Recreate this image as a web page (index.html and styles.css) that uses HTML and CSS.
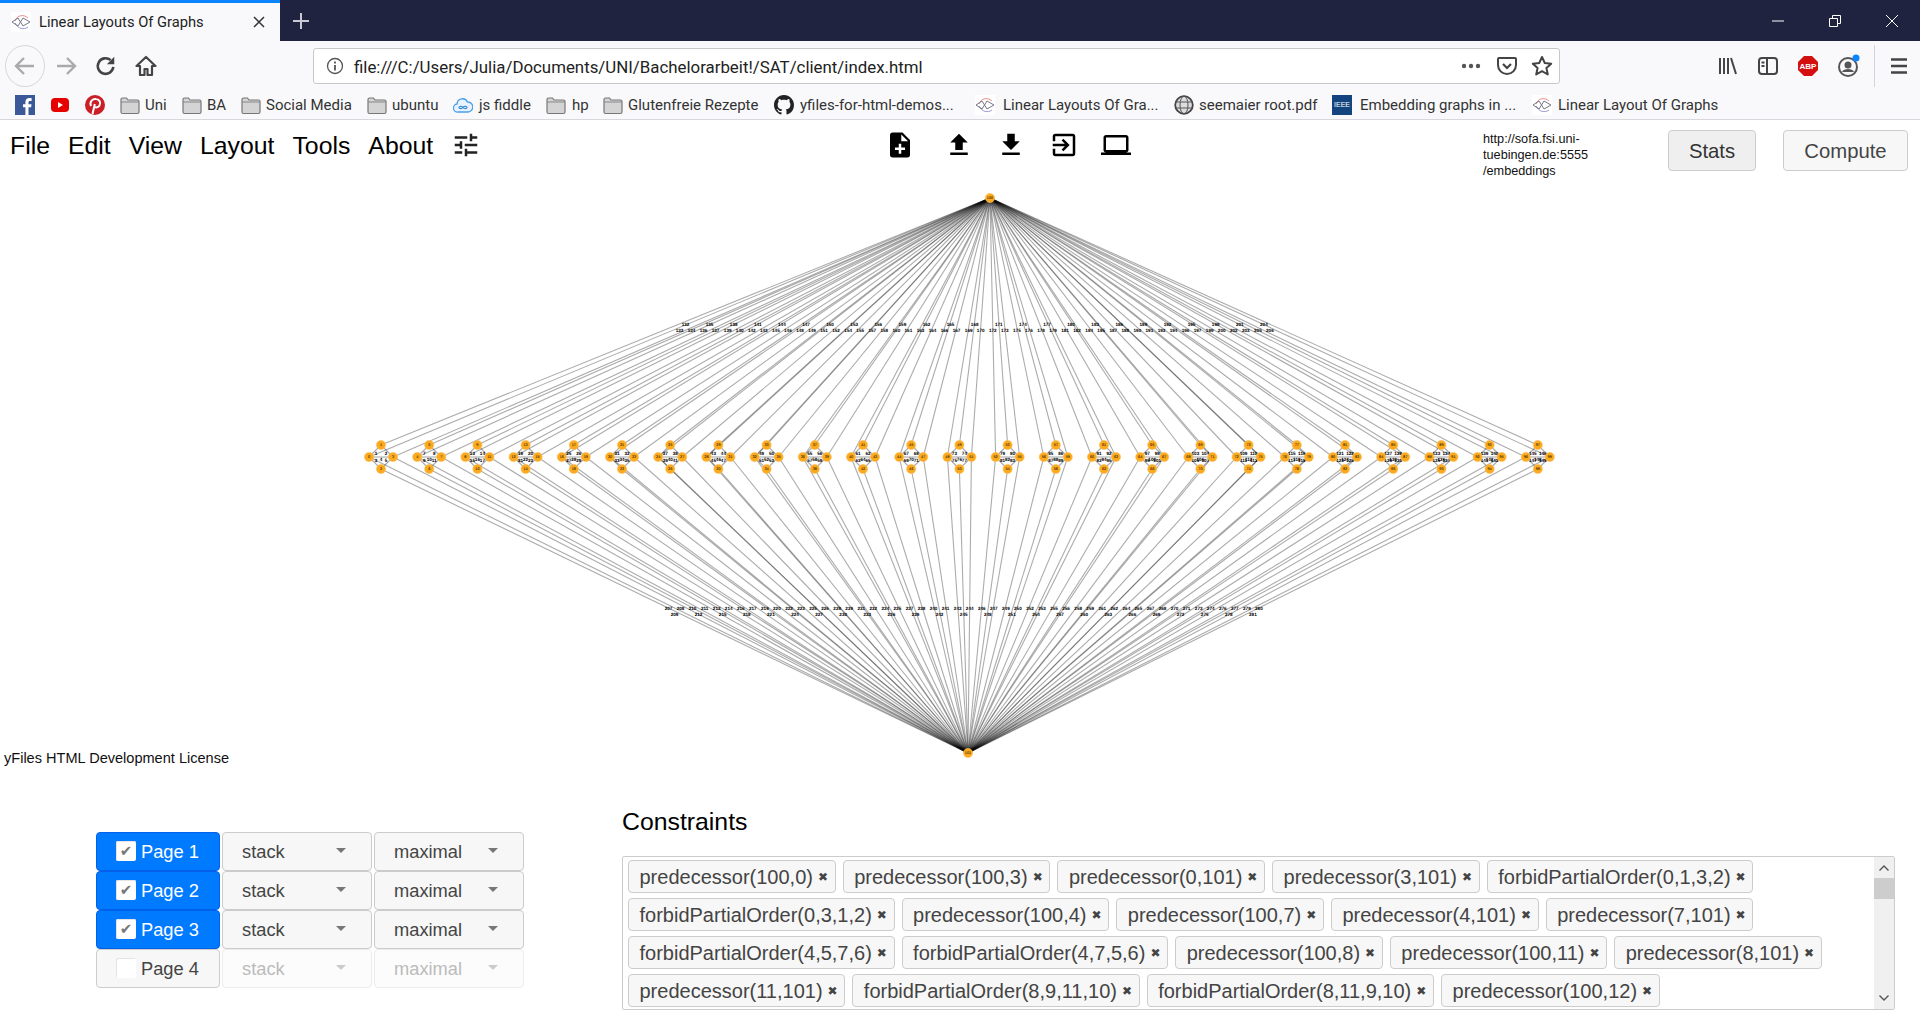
FILE: index.html
```html
<!DOCTYPE html>
<html lang="en">
<head>
<meta charset="UTF-8">
<title>Linear Layouts Of Graphs</title>
<link rel="stylesheet" href="styles.css">
</head>
<body>
    <svg class="defs" width="0" height="0">
        <symbol id="favicon" viewBox="0 0 20 20">
            <rect width="20" height="20" fill="#fff"/>
            <path d="M4 9C6 3 13 2 17 6" fill="none" stroke="#e88" stroke-width="1"/>
            <path d="M4 11c3 6 9 7 13 4" fill="none" stroke="#99c" stroke-width="1"/>
            <path d="M1 10l6-4 5 8 7-4M1 10l6 4 5-8 7 4" fill="none" stroke="#778" stroke-width="1"/>
        </symbol>
        <symbol id="folder" viewBox="0 0 20 20">
            <path d="M1 4.500C1 3.500 1.500 3 2.500 3h4L8 5h9.500c1 0 1.500.5 1.500 1.500V17c0 1-.5 1.500-1.500 1.500h-15C1.500 18.500 1 18 1 17z" fill="#d4d4d4" stroke="#777" stroke-width="1.200"/>
            <path d="M1 7h18" stroke="#888" stroke-width="1"/>
        </symbol>
    </svg>

    <div class="tabbar">
        <div class="tab">
            <svg class="favicon" width="20" height="20"><use href="#favicon"/></svg>
            <span class="tab-title">Linear Layouts Of Graphs</span>
            <svg class="tab-close" width="14" height="14" viewBox="0 0 14 14"><path d="M2 2l10 10M12 2L2 12" stroke="#333" stroke-width="1.500"/></svg>
        </div>
        <svg class="new-tab" width="18" height="18" viewBox="0 0 18 18"><path d="M9 1v16M1 9h16" stroke="#c8c9d4" stroke-width="2"/></svg>
        <div class="window-btns">
            <svg width="14" height="14" viewBox="0 0 14 14"><path d="M1 7h12" stroke="#fff"/></svg>
            <svg width="14" height="14" viewBox="0 0 14 14"><path d="M1.500 4.500h8v8h-8zM4.500 4.500v-3h8v8h-3" fill="none" stroke="#fff"/></svg>
            <svg width="14" height="14" viewBox="0 0 14 14"><path d="M1 1l12 12M13 1L1 13" stroke="#fff"/></svg>
        </div>
    </div>

    <div class="navbar">
        <div class="back-btn">
            <svg width="24" height="24" viewBox="0 0 24 24"><path d="M21 12H4M11 4l-8 8 8 8" fill="none" stroke="#aaa" stroke-width="2.400"/></svg>
        </div>
        <div class="nav-btn nav-forward">
            <svg width="24" height="24" viewBox="0 0 24 24"><path d="M3 12h17M13 4l8 8-8 8" fill="none" stroke="#aaa" stroke-width="2.400"/></svg>
        </div>
        <div class="nav-btn">
            <svg width="22" height="22" viewBox="0 0 24 24"><path d="M20 13a8.500 8.500 0 1 1-3-7.500" fill="none" stroke="#444" stroke-width="2.800"/><path d="M21 2v8h-8z" fill="#444"/></svg>
        </div>
        <div class="nav-btn">
            <svg width="24" height="24" viewBox="0 0 24 24"><path d="M12 3L2.500 12H6v9h4.500v-6h3v6H18v-9h3.500z" fill="none" stroke="#444" stroke-width="2.200" stroke-linejoin="round"/></svg>
        </div>
        <div class="urlbar">
            <svg class="url-info" width="18" height="18" viewBox="0 0 18 18"><circle cx="9" cy="9" r="7.500" fill="none" stroke="#555" stroke-width="1.300"/><path d="M9 8v5.500M9 4.500v2" stroke="#555" stroke-width="1.800"/></svg>
            <span class="url-text">file:///C:/Users/Julia/Documents/UNI/Bachelorarbeit!/SAT/client/index.html</span>
            <svg class="url-dots" width="20" height="6" viewBox="0 0 20 6"><circle cx="3" cy="3" r="2.200" fill="#555"/><circle cx="10" cy="3" r="2.200" fill="#555"/><circle cx="17" cy="3" r="2.200" fill="#555"/></svg>
            <svg class="url-pocket" width="22" height="22" viewBox="0 0 22 22"><path d="M3 3h16c.6 0 1 .4 1 1v6c0 5-4 9-9 9s-9-4-9-9V4c0-.6.4-1 1-1z" fill="none" stroke="#444" stroke-width="2"/><path d="M7 9l4 4 4-4" fill="none" stroke="#444" stroke-width="2.200"/></svg>
            <svg class="url-star" width="22" height="22" viewBox="0 0 22 22"><path d="M11 2l2.800 6 6.400.7-4.800 4.300 1.400 6.500L11 16.200 5.200 19.500 6.600 13 1.800 8.700 8.200 8z" fill="none" stroke="#444" stroke-width="2" stroke-linejoin="round"/></svg>
        </div>
        <div class="nav-right">
            <svg width="22" height="22" viewBox="0 0 22 22"><path d="M3 3v16M7 3v16M11 3v16M14 3l5 16" stroke="#444" stroke-width="2" fill="none"/></svg>
            <svg width="22" height="22" viewBox="0 0 22 22"><rect x="2" y="3" width="18" height="16" rx="3" fill="none" stroke="#444" stroke-width="2"/><path d="M10 3v16M4.500 7.500h3M4.500 11h3" stroke="#444" stroke-width="2"/></svg>
            <svg width="22" height="22" viewBox="0 0 22 22"><path d="M7 1h8l6 6v8l-6 6H7l-6-6V7z" fill="#d40f0f"/><text class="abp" x="11" y="14" text-anchor="middle">ABP</text></svg>
            <svg width="24" height="24" viewBox="0 0 24 24"><circle cx="11" cy="13" r="9" fill="none" stroke="#555" stroke-width="2"/><circle cx="11" cy="11" r="3.500" fill="#555"/><path d="M5 18c1-4 11-4 12 0z" fill="#555"/><circle cx="19" cy="4" r="3.500" fill="#0a84ff"/></svg>
            <div class="nav-divider"></div>
            <svg width="22" height="22" viewBox="0 0 22 22"><path d="M3 4.500h16M3 11h16M3 17.500h16" stroke="#444" stroke-width="2.400"/></svg>
        </div>
    </div>

    <div class="bookmarks">
        <div class="bm"><svg width="20" height="20" viewBox="0 0 20 20"><rect width="20" height="20" fill="#3b5998"/><path fill="#fff" d="M13.500 20v-7.700h2.600l.4-3h-3V7.400c0-.9.2-1.500 1.500-1.500h1.600V3.200c-.3 0-1.200-.1-2.300-.1-2.300 0-3.900 1.400-3.900 4v2.200H8v3h2.400V20z"/></svg></div>
        <div class="bm"><svg width="18" height="20" viewBox="0 0 18 20"><rect y="3" width="18" height="14" rx="4" fill="#e60000"/><path d="M7 7l5 3-5 3z" fill="#fff"/></svg></div>
        <div class="bm"><svg width="20" height="20" viewBox="0 0 20 20"><circle cx="10" cy="10" r="10" fill="#cb1f27"/><path d="M7.500 19l2.300-10M6 11C4 6.500 8 3.500 11 4c4 .5 5 4 3.500 6.500-1.300 2.200-4 2.400-5 1" fill="none" stroke="#fff" stroke-width="2"/></svg></div>
        <div class="bm bm-folder"><svg width="20" height="20"><use href="#folder"/></svg>Uni</div>
        <div class="bm bm-folder"><svg width="20" height="20"><use href="#folder"/></svg>BA</div>
        <div class="bm bm-folder"><svg width="20" height="20"><use href="#folder"/></svg>Social Media</div>
        <div class="bm bm-folder"><svg width="20" height="20"><use href="#folder"/></svg>ubuntu</div>
        <div class="bm"><svg width="20" height="20" viewBox="0 0 20 20"><path d="M5 17a4 4 0 0 1-1-8 5.500 5.500 0 0 1 10.500-2A5 5 0 0 1 15 17z" fill="#e8f3ff" stroke="#4a9fe8" stroke-width="1.300"/><path d="M10 12.500c-1-1.500-4-1.500-4 0s3 1.500 4 0 4-1.500 4 0-3 1.500-4 0z" fill="none" stroke="#3a8fd8" stroke-width="1.200"/></svg>js fiddle</div>
        <div class="bm"><svg width="20" height="20"><use href="#folder"/></svg>hp</div>
        <div class="bm bm-folder"><svg width="20" height="20"><use href="#folder"/></svg>Glutenfreie Rezepte</div>
        <div class="bm"><svg width="20" height="20" viewBox="0 0 16 16"><path fill="#222" d="M8 0C3.580 0 0 3.580 0 8c0 3.540 2.290 6.530 5.470 7.590.4.070.55-.17.55-.38 0-.19-.01-.82-.01-1.490-2.010.37-2.530-.49-2.690-.94-.09-.23-.48-.94-.82-1.130-.28-.15-.68-.52-.01-.53.63-.01 1.080.58 1.230.82.72 1.210 1.870.87 2.330.66.07-.52.28-.87.51-1.070-1.780-.2-3.640-.89-3.640-3.950 0-.87.31-1.590.82-2.150-.08-.2-.36-1.020.08-2.120 0 0 .67-.21 2.200.82.64-.18 1.320-.27 2-.27.68 0 1.360.09 2 .27 1.530-1.040 2.200-.82 2.200-.82.44 1.100.16 1.920.08 2.120.51.56.82 1.270.82 2.150 0 3.070-1.870 3.750-3.650 3.950.29.25.54.73.54 1.480 0 1.070-.01 1.930-.01 2.200 0 .21.15.46.55.38A8.013 8.013 0 0 0 16 8c0-4.420-3.580-8-8-8z"/></svg>yfiles-for-html-demos...</div>
        <div class="bm bm-wide"><svg width="20" height="20"><use href="#favicon"/></svg>Linear Layouts Of Gra...</div>
        <div class="bm bm-folder"><svg width="20" height="20" viewBox="0 0 20 20"><circle cx="10" cy="10" r="8.800" fill="#ddd" stroke="#444" stroke-width="1.800"/><ellipse cx="10" cy="10" rx="4" ry="8.800" fill="none" stroke="#555"/><path d="M1.500 7h17M1.500 13h17" stroke="#555"/></svg>seemaier root.pdf</div>
        <div class="bm bm-wide"><svg width="20" height="20" viewBox="0 0 20 20"><rect width="20" height="20" fill="#14447e"/><text class="bm-ieee" x="10" y="12" text-anchor="middle">IEEE</text></svg>Embedding graphs in ...</div>
        <div class="bm"><svg width="20" height="20"><use href="#favicon"/></svg>Linear Layout Of Graphs</div>
    </div>

    <div class="menubar">
        <div class="menu">
            <span>File</span>
            <span>Edit</span>
            <span>View</span>
            <span>Layout</span>
            <span>Tools</span>
            <span>About</span>
            <svg width="30" height="30" viewBox="0 0 24 24"><path d="M3 17v2h6v-2H3zM3 5v2h10V5H3zm10 16v-2h8v-2h-8v-2h-2v6h2zM7 9v2H3v2h4v2h2V9H7zm14 4v-2H11v2h10zm-6-4h2V7h4V5h-4V3h-2v6z"/></svg>
        </div>
        <div class="tools">
            <svg class="tool-first" width="30" height="30" viewBox="0 0 24 24"><path d="M14 2H6c-1.100 0-1.990.9-1.990 2L4 20c0 1.100.89 2 1.990 2H18c1.100 0 2-.9 2-2V8l-6-6zm2 14h-3v3h-2v-3H8v-2h3v-3h2v3h3v2zm-3-7V3.500L18.500 9H13z"/></svg>
            <svg width="30" height="30" viewBox="0 0 24 24"><path d="M9 16h6v-6h4l-7-7-7 7h4zm-4 2h14v2H5z"/></svg>
            <svg width="30" height="30" viewBox="0 0 24 24"><path d="M19 9h-4V3H9v6H5l7 7 7-7zM5 18v2h14v-2H5z"/></svg>
            <svg width="30" height="30" viewBox="0 0 24 24"><path d="M10.090 15.590L11.500 17l5-5-5-5-1.410 1.410L12.670 11H3v2h9.670l-2.580 2.590zM19 3H5c-1.110 0-2 .9-2 2v4h2V5h14v14H5v-4H3v4c0 1.100.89 2 2 2h14c1.100 0 2-.9 2-2V5c0-1.100-.9-2-2-2z"/></svg>
            <svg width="30" height="30" viewBox="0 0 24 24"><path d="M20 18c1.100 0 1.990-.9 1.990-2L22 6c0-1.100-.9-2-2-2H4c-1.100 0-2 .9-2 2v10c0 1.100.9 2 2 2H0v2h24v-2h-4zM4 6h16v10H4V6z"/></svg>
        </div>
        <div class="server-url">http://sofa.fsi.uni-<br>tuebingen.de:5555<br>/embeddings</div>
        <button class="btn btn-stats">Stats</button>
        <button class="btn btn-compute">Compute</button>
    </div>

    <div class="graph" id="graph">
        <div class="license">yFiles HTML Development License</div>
    </div>

    <div class="panel">
        <div class="pages">
            <div class="page-btn active"><span class="check">&#10004;</span>Page 1</div>
            <div class="select"><span>stack</span><i class="caret"></i></div>
            <div class="select"><span>maximal</span><i class="caret"></i></div>

            <div class="page-btn active"><span class="check">&#10004;</span>Page 2</div>
            <div class="select"><span>stack</span><i class="caret"></i></div>
            <div class="select"><span>maximal</span><i class="caret"></i></div>

            <div class="page-btn active"><span class="check">&#10004;</span>Page 3</div>
            <div class="select"><span>stack</span><i class="caret"></i></div>
            <div class="select"><span>maximal</span><i class="caret"></i></div>

            <div class="page-btn"><span class="check"></span>Page 4</div>
            <div class="select disabled"><span>stack</span><i class="caret"></i></div>
            <div class="select disabled"><span>maximal</span><i class="caret"></i></div>
        </div>

        <div class="constraints">
            <h2>Constraints</h2>
            <div class="constraint-box">
                <div class="chips">
                    <span class="chip">predecessor(100,0)<b>&#10006;</b></span>
                    <span class="chip">predecessor(100,3)<b>&#10006;</b></span>
                    <span class="chip">predecessor(0,101)<b>&#10006;</b></span>
                    <span class="chip">predecessor(3,101)<b>&#10006;</b></span>
                    <span class="chip">forbidPartialOrder(0,1,3,2)<b>&#10006;</b></span>
                    <span class="chip">forbidPartialOrder(0,3,1,2)<b>&#10006;</b></span>
                    <span class="chip">predecessor(100,4)<b>&#10006;</b></span>
                    <span class="chip">predecessor(100,7)<b>&#10006;</b></span>
                    <span class="chip">predecessor(4,101)<b>&#10006;</b></span>
                    <span class="chip">predecessor(7,101)<b>&#10006;</b></span>
                    <span class="chip">forbidPartialOrder(4,5,7,6)<b>&#10006;</b></span>
                    <span class="chip">forbidPartialOrder(4,7,5,6)<b>&#10006;</b></span>
                    <span class="chip">predecessor(100,8)<b>&#10006;</b></span>
                    <span class="chip">predecessor(100,11)<b>&#10006;</b></span>
                    <span class="chip">predecessor(8,101)<b>&#10006;</b></span>
                    <span class="chip">predecessor(11,101)<b>&#10006;</b></span>
                    <span class="chip">forbidPartialOrder(8,9,11,10)<b>&#10006;</b></span>
                    <span class="chip">forbidPartialOrder(8,11,9,10)<b>&#10006;</b></span>
                    <span class="chip">predecessor(100,12)<b>&#10006;</b></span>
                </div>
                <div class="scrollbar">
                    <svg width="12" height="8" viewBox="0 0 12 8"><path d="M1.500 6.500L6 2l4.500 4.500" fill="none" stroke="#555" stroke-width="1.400"/></svg>
                    <div class="scroll-track"><div class="scroll-thumb"></div></div>
                    <svg width="12" height="8" viewBox="0 0 12 8"><path d="M1.500 1.500L6 6l4.500-4.500" fill="none" stroke="#555" stroke-width="1.400"/></svg>
                </div>
            </div>
        </div>
    </div>

    <script src="graph.js"></script>
</body>
</html>
```

FILE: styles.css
```css
* {
    box-sizing: border-box;
}

body {
    margin: 0;
    width: 1920px;
    height: 1030px;
    overflow: hidden;
    background-color: #fff;
    font-family: "Liberation Sans", Arial, sans-serif;
    color: #000;
}

.defs {
    display: block;
    height: 0;
}

/* browser window */

.tabbar {
    display: flex;
    align-items: center;
    height: 41px;
    background-color: #20233f;
}

.tab {
    display: flex;
    align-items: center;
    width: 280px;
    height: 41px;
    padding: 0 14px 0 11px;
    background-color: #f9f9fb;
    border-top: 3px solid #0a84ff;
    font-family: Roboto, sans-serif;
    font-size: 14.700px;
    color: #222;
}

.tab-title {
    margin-left: 8px;
    flex: 1;
}

.new-tab {
    margin-left: 12px;
}

.window-btns {
    display: flex;
    gap: 43px;
    margin-left: auto;
    margin-right: 21px;
}

.navbar {
    display: flex;
    align-items: center;
    height: 49px;
    background-color: #f9f9fb;
}

.back-btn {
    display: flex;
    align-items: center;
    justify-content: center;
    width: 40px;
    height: 42px;
    margin-left: 5px;
    border: 1px solid #d8d8dc;
    border-radius: 50%;
}

.nav-btn {
    display: flex;
    justify-content: center;
    width: 40px;
}

.nav-forward {
    margin-left: 1px;
}

.urlbar {
    display: flex;
    align-items: center;
    width: 1247px;
    height: 36px;
    margin: 1px 0 0 147px;
    padding-left: 12px;
    background-color: #fff;
    border: 1px solid #c8c8c8;
    border-radius: 3px;
}

.url-text {
    margin-left: 10px;
    padding-top: 2px;
    font-family: Roboto, sans-serif;
    font-size: 16.850px;
    color: #222;
}

.url-dots {
    margin-left: auto;
}

.url-pocket {
    margin-left: 15px;
}

.url-star {
    margin: 0 6px 0 13px;
}

.nav-right {
    display: flex;
    align-items: center;
    gap: 18px;
    margin-left: 157px;
}

.nav-divider {
    width: 1px;
    height: 42px;
    margin-left: -5px;
    margin-right: -5px;
    background-color: #d4d4d8;
}

.abp {
    font-family: "Liberation Sans", sans-serif;
    font-size: 8px;
    font-weight: bold;
    fill: #fff;
}

.bookmarks {
    display: grid;
    grid-template-columns: 36px 34px 35px 62px 59px 126px 86px 93px 57px 171px 201px 199px 158px 200px auto;
    align-items: center;
    height: 30px;
    padding-left: 15px;
    background-color: #f9f9fb;
    border-bottom: 1px solid #d8d8dc;
    font-family: Roboto, sans-serif;
    font-size: 15px;
    color: #333;
}

.bm {
    display: flex;
    align-items: center;
    gap: 6px;
    white-space: nowrap;
}

.bm-folder {
    gap: 5px;
}

.bm-wide {
    gap: 8px;
}

.bm-ieee {
    font-family: "Liberation Sans", sans-serif;
    font-size: 7px;
    fill: #fff;
}

/* app toolbar */

.menubar {
    display: flex;
    align-items: flex-start;
    height: 60px;
    padding-top: 10px;
}

.menu {
    display: flex;
    align-items: center;
    gap: 18px;
    width: 885px;
    padding-left: 10px;
    font-size: 24.800px;
    line-height: 32px;
}

.menu svg {
    fill: #222;
    margin-top: -2px;
}

.tools {
    display: flex;
    gap: 22.500px;
}

.tool-first {
    margin-right: 6px;
}

.server-url {
    width: 185px;
    margin-left: 352px;
    margin-top: 2px;
    font-size: 12.700px;
    line-height: 15.800px;
    color: #111;
}

.btn {
    height: 41px;
    padding: 2px 0 0;
    background-color: #f7f7f7;
    border: 1px solid #ccc;
    border-radius: 4px;
    font-family: "Liberation Sans", Arial, sans-serif;
    font-size: 20.300px;
    color: #444;
}

.btn-stats {
    width: 88px;
    background-color: #efefef;
    color: #333;
}

.btn-compute {
    width: 125px;
    margin-left: 27px;
}

/* graph canvas */

.graph {
    position: relative;
    height: 592px;
}

.graph svg {
    display: block;
    text-rendering: geometricPrecision;
}

.graph text {
    font-family: "Liberation Sans", sans-serif;
    fill: #000;
    text-anchor: middle;
}

.edge-label {
    font-size: 4.600px;
    font-weight: bold;
}

.node-label {
    font-size: 3.800px;
}

.license {
    position: absolute;
    left: 4px;
    top: 570px;
    font-size: 14.550px;
    line-height: 17px;
    color: #111;
}

/* bottom panel */

.panel {
    display: flex;
    align-items: flex-start;
}

.pages {
    display: grid;
    grid-template-columns: 124px 150px 150px;
    grid-auto-rows: 39px;
    column-gap: 2px;
    margin: 60px 0 0 96px;
    font-size: 18.300px;
}

.page-btn {
    display: flex;
    align-items: center;
    padding-left: 19px;
    background-color: #f7f7f7;
    border: 1px solid #ccc;
    border-radius: 4px;
    color: #444;
}

.page-btn.active {
    background-color: #007bff;
    border-color: #0460e8;
    color: #fff;
}

.check {
    display: flex;
    align-items: center;
    justify-content: center;
    width: 20px;
    height: 20px;
    margin-right: 5px;
    margin-top: -2px;
    background-color: #fff;
    border-radius: 2px;
    box-shadow: inset 1px 1px 0 #e4e4e4;
    font-family: "DejaVu Sans", sans-serif;
    font-size: 15px;
    color: #777;
}

.select {
    display: flex;
    align-items: center;
    justify-content: space-between;
    padding: 0 25px 0 19px;
    background-color: #f7f7f7;
    border: 1px solid #ccc;
    border-radius: 4px;
    color: #444;
}

.select.disabled {
    background-color: #fcfcfc;
    border-color: #ececec;
    color: #bbb;
}

.caret {
    width: 0;
    height: 0;
    margin-top: -3px;
    border-left: 5px solid transparent;
    border-right: 5px solid transparent;
    border-top: 5px solid #777;
}

.select.disabled .caret {
    border-top-color: #ccc;
}

.constraints {
    width: 1273px;
    margin-left: 98px;
}

h2 {
    margin: 35px 0 19px;
    font-size: 24.800px;
    font-weight: normal;
    line-height: 30px;
}

.constraint-box {
    display: flex;
    height: 154px;
    background-color: #fff;
    border: 1px solid #ccc;
    border-radius: 2px;
    overflow: hidden;
}

.chips {
    display: flex;
    flex-wrap: wrap;
    align-content: flex-start;
    gap: 5px 7px;
    flex: 1;
    padding: 3px 5px;
}

.chip {
    display: flex;
    align-items: center;
    height: 33px;
    padding: 1px 6.700px 0 10.500px;
    background-color: #f7f7f7;
    border: 1px solid #ccc;
    border-radius: 4px;
    font-size: 20px;
    color: #444;
}

.chip b {
    margin-left: 5px;
    font-family: "DejaVu Sans", sans-serif;
    font-size: 12px;
    font-weight: normal;
    color: #444;
}

.scrollbar {
    display: flex;
    flex-direction: column;
    align-items: center;
    justify-content: space-between;
    width: 20px;
    padding: 7px 0;
    background-color: #f0f0f0;
}

.scroll-track {
    flex: 1;
    width: 100%;
}

.scroll-thumb {
    width: 100%;
    height: 21px;
    margin-top: 6px;
    background-color: #cdcdcd;
}
```

FILE: graph.js
```js
// draws the graph: 25 small clusters hanging between two apex nodes
var NS = "http://www.w3.org/2000/svg";
var graph = document.getElementById("graph");

var svg = document.createElementNS(NS, "svg");
svg.setAttribute("width", 1920);
svg.setAttribute("height", 592);
svg.setAttribute("viewBox", "0 180 1920 592");
graph.insertBefore(svg, graph.firstChild);

var top_node = { x: 990, y: 198 };
var bottom_node = { x: 968, y: 753 };
var cluster_x = 381;
var cluster_step = 48.2;
var cluster_y = 457;
var arm = 12;
var edge_layer = add("g", svg, {});
var label_layer = add("g", svg, {});
var node_layer = add("g", svg, {});

function add(tag, parent, attrs) {
    var el = document.createElementNS(NS, tag);
    for (var key in attrs) {
        el.setAttribute(key, attrs[key]);
    }
    parent.appendChild(el);
    return el;
}

function line(a, b) {
    add("line", edge_layer, {
        x1: a.x, y1: a.y, x2: b.x, y2: b.y,
        stroke: "#000", "stroke-width": 1.1, "stroke-opacity": 0.33
    });
}

function label(x, y, text) {
    var t = add("text", label_layer, { x: x, y: y, "class": "edge-label" });
    t.textContent = text;
}

function midLabel(a, b, text) {
    label((a.x + b.x) / 2, (a.y + b.y) / 2 + 4.5, text);
}

function node(p, text) {
    add("circle", node_layer, { cx: p.x, cy: p.y, r: 4.6, fill: "#fbaa1e", stroke: "#fcc060", "stroke-width": 0.6 });
    var t = add("text", node_layer, { x: p.x, y: p.y + 1.4, "class": "node-label" });
    t.textContent = text;
}

for (var i = 0; i < 25; i++) {
    var cx = cluster_x + i * cluster_step;
    var n = i * 4;
    var left = { x: cx - arm, y: cluster_y };
    var up = { x: cx, y: cluster_y - arm };
    var down = { x: cx, y: cluster_y + arm };
    var right = { x: cx + arm, y: cluster_y };

    line(top_node, up);
    line(top_node, left);
    line(top_node, right);
    line(bottom_node, down);
    line(bottom_node, left);
    line(bottom_node, right);

    line(left, up);
    line(up, right);
    line(right, down);
    line(down, left);
    line(left, right);

    midLabel(top_node, up, 132 + i * 3);
    midLabel(top_node, left, 133 + i * 3);
    midLabel(top_node, right, 134 + i * 3);
    midLabel(bottom_node, left, 207 + i * 3);
    midLabel(bottom_node, right, 208 + i * 3);
    midLabel(bottom_node, down, 209 + i * 3);

    var e = i * 6;
    label(cx - 5, cluster_y - 2.4, e + 1);
    label(cx + 5, cluster_y - 2.4, e + 2);
    label(cx - 5, cluster_y + 5, e + 3);
    label(cx, cluster_y + 4, e + 4);
    label(cx + 5, cluster_y + 5, e + 5);

    node(left, n);
    node(up, n + 1);
    node(down, n + 2);
    node(right, n + 3);
}

node(top_node, 100);
node(bottom_node, 101);
```
